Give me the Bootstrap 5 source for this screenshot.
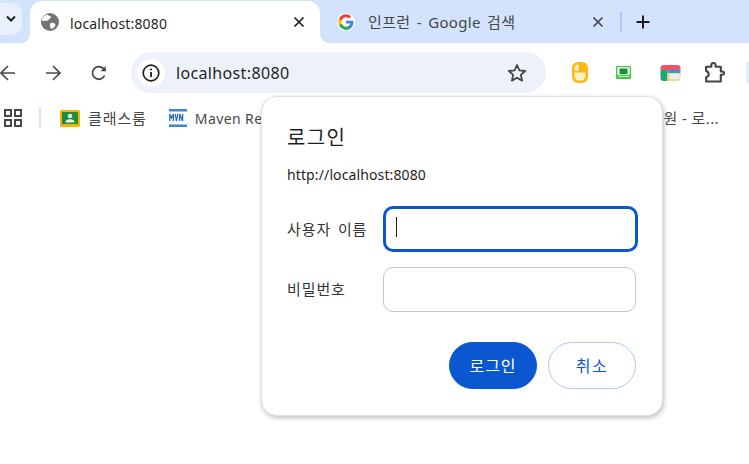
<!DOCTYPE html>
<html lang="ko"><head><meta charset="utf-8"><title>로그인</title>
<link href="https://cdn.jsdelivr.net/npm/bootstrap@5.3.0/dist/css/bootstrap.min.css" rel="stylesheet">
<style>
html,body{height:100%;overflow:hidden;background:#fff;}
body{font-family:"Noto Sans","Noto Sans CJK KR",sans-serif;color:#1f1f1f;position:relative;width:749px;height:464px;}
.strip{height:43px;background:#d3e3fd;padding-top:1px;}
.tabmenu{width:22px;height:32px;margin-top:2px;background:#e9f0fc;border-radius:0 10px 10px 0;flex:none;}
.tab{height:42px;font-size:14px;}
.tab-on{margin-left:8px;width:290px;background:#fff;border-radius:12px 12px 0 0;position:relative;padding-left:11px;color:#1f1f1f;letter-spacing:.15px;}
.tab-on::before,.tab-on::after{content:"";position:absolute;bottom:0;width:10px;height:10px;}
.tab-on::before{left:-10px;background:radial-gradient(circle at 0 0,transparent 10px,#fff 10.5px);}
.tab-on::after{right:-10px;background:radial-gradient(circle at 100% 0,transparent 10px,#fff 10.5px);}
.tab-off{width:300px;padding-left:17px;color:#444746;font-size:15px;letter-spacing:.35px;word-spacing:2px;}
.tabtitle{margin-left:11px;flex:1 1 auto;}
.tab-off .tabtitle{margin-left:13px;}
.tab-on .tabtitle{position:relative;top:1px;}
.tabx{width:12px;height:12px;margin-right:15px;flex:none;}
.tab-off .tabx{margin-right:16px;}
.sep{width:2px;height:20px;background:#a8c7fa;}
.plus{margin-left:14px;}
.tools{height:53px;background:#fff;padding-top:6px;}
.navzone{width:131px;}
.ico-gap{margin-left:30px;}
.ico-gap2{margin-left:29px;}
.omni{width:415px;height:41px;background:#edf2fa;border-radius:21px;padding:0 19px 0 6px;font-size:16px;color:#1f1f1f;letter-spacing:.35px;}
.infoc{width:28px;height:28px;border-radius:50%;background:#fff;flex:none;margin-right:11px;}
.exts{margin-left:26px;}
.extc{width:44px;}
.ext-last{width:42px;}
.ext-tail{width:4px;background:#e4ecfb;}
.bmarks{height:44px;font-size:15px;color:#474747;letter-spacing:.9px;}
.bsep{width:2px;height:20px;background:#d3e3fd;margin:0 19px 0 17px;}
.bname{margin-left:8px;}
.mvn{margin-left:22px;}
.mvntext{font-size:14px;letter-spacing:.4px;white-space:nowrap;}
.tailtext{margin-right:30px;letter-spacing:.4px;}
.dlg{position:absolute;left:261px;top:96px;width:402px;height:320px;background:#fff;border:1px solid #e0e0e0;border-radius:16px;box-shadow:1px 2px 5px rgba(0,0,0,.25);padding:27px 25px 0;}
.dlgtitle{font-size:20px;font-weight:400;line-height:27px;margin:0;color:#1f1f1f;letter-spacing:1.4px;}
.dlgurl{font-size:14px;line-height:20px;margin-top:14px;letter-spacing:.12px;}
.flabel{width:96px;font-size:15px;flex:none;margin:0;letter-spacing:.9px;word-spacing:2px;color:#333;}
.finput{width:253px;height:45px;border:1px solid #c4c7c5;border-radius:10px;background:#fff;box-shadow:none;padding:0 12px;flex:none;}
.finput:focus{border-color:#c4c7c5;box-shadow:none;}
.fon,.fon:focus{width:255px;height:46px;border:3px solid #0b57d0;caret-color:transparent;}
.caretbar{position:absolute;left:134px;top:120px;width:1px;height:20px;background:#1f1f1f;}
.r1{margin-top:21px;}
.r2{margin-top:15px;height:45px;}
.acts{margin-top:30px;gap:11px;margin-right:1px;}
.pbtn{width:88px;height:47px;border-radius:24px;font-size:16px;padding:0;letter-spacing:1px;}
.btn-login,.btn-login:hover{background:#0b57d0;color:#fff;border:1px solid #0b57d0;}
.btn-cancel,.btn-cancel:hover{background:#fff;color:#0b57d0;border:1px solid #a8c7fa;letter-spacing:1.5px;}
</style></head>
<body>
<div class="strip d-flex align-items-start">
  <div class="tabmenu d-flex align-items-center justify-content-center">
    <svg width="12" height="8" viewBox="0 0 12 8"><path d="M2 1.500 6 5.500 10 1.500" fill="none" stroke="#1f1f1f" stroke-width="2"/></svg>
  </div>
  <div class="tab tab-on d-flex align-items-center">
    <svg width="18" height="18" viewBox="0 0 18 18" class="flex-shrink-0"><circle cx="9" cy="9" r="9" fill="#757575"/><path d="M6 1.500c1 1.500 3.500 1 4 2.500.3 1.500-2 1.500-2.500 3C6 8.500 3 7 1 8c-.3-3 2-5.500 5-6.500zM10 10c2-.5 4 .5 4.500 2-.5 1.500-2 3-4 4-.5-1-1.500-1.500-1.500-3 0-1.500 0-2.500 1-3z" fill="#fff"/></svg>
    <span class="tabtitle">localhost:8080</span>
    <svg class="tabx" viewBox="0 0 12 12"><path d="M1.500 1.500 10.500 10.500M10.500 1.500 1.500 10.500" stroke="#1f1f1f" stroke-width="1.700"/></svg>
  </div>
  <div class="tab tab-off d-flex align-items-center">
    <svg width="18" height="18" viewBox="0 0 48 48" class="flex-shrink-0"><circle cx="24" cy="24" r="24" fill="#fff"/><path fill="#4285F4" d="M44 24.500c0-1.400-.1-2.800-.4-4.100H24v7.800h11.200c-.5 2.600-2 4.800-4.200 6.300v5.200h6.700c3.900-3.600 6.300-8.900 6.300-15.200z"/><path fill="#34A853" d="M24 45c5.600 0 10.400-1.900 13.700-5.100L31 34.700c-1.900 1.300-4.200 2-7 2-5.400 0-10-3.600-11.600-8.500H5.500v5.300C8.900 40.300 15.900 45 24 45z"/><path fill="#FBBC05" d="M12.400 28.200c-.4-1.300-.7-2.700-.7-4.200s.3-2.900.7-4.200v-5.300H5.500C4.100 17.300 3.300 20.500 3.300 24s.8 6.700 2.200 9.500z"/><path fill="#EA4335" d="M24 11.300c3 0 5.800 1 8 3.100l6-6C34.400 5 29.600 3 24 3 15.900 3 8.900 7.700 5.500 14.500l6.900 5.300C14 14.900 18.600 11.300 24 11.300z"/></svg>
    <span class="tabtitle">인프런 - Google 검색</span>
    <svg class="tabx" viewBox="0 0 12 12"><path d="M1.500 1.500 10.500 10.500M10.500 1.500 1.500 10.500" stroke="#444746" stroke-width="1.700"/></svg>
  </div>
  <div class="d-flex align-items-center tab">
    <span class="sep"></span>
    <svg class="plus" width="14" height="14" viewBox="0 0 14 14"><path d="M7 0.500V13.500M0.500 7H13.500" stroke="#1f1f1f" stroke-width="2"/></svg>
  </div>
</div>

<div class="tools d-flex align-items-center">
  <div class="navzone d-flex align-items-center flex-shrink-0">
    <svg width="16" height="16" viewBox="0 0 16 16" class="flex-shrink-0"><path d="M15 8H1M8 1 1 8l7 7" fill="none" stroke="#474747" stroke-width="1.600"/></svg>
    <svg width="16" height="16" viewBox="0 0 16 16" class="flex-shrink-0 ico-gap"><path d="M0 8H14M7 1l7 7-7 7" fill="none" stroke="#474747" stroke-width="1.600"/></svg>
    <svg width="16" height="16" viewBox="0 0 16 16" class="flex-shrink-0 ico-gap2"><path d="M13.600 10.500A6.300 6.300 0 1 1 12.300 3.500L14.500 5.500" fill="none" stroke="#474747" stroke-width="1.800"/><path d="M14.800 1V6.200H9.600z" fill="#474747"/></svg>
  </div>
  <div class="omni d-flex align-items-center flex-shrink-0">
    <span class="infoc d-flex align-items-center justify-content-center">
      <svg width="18" height="18" viewBox="0 0 18 18"><circle cx="9" cy="9" r="7.800" fill="none" stroke="#1f1f1f" stroke-width="1.700"/><path d="M9 8V13" stroke="#1f1f1f" stroke-width="1.800"/><circle cx="9" cy="5.500" r="1.100" fill="#1f1f1f"/></svg>
    </span>
    <span class="flex-grow-1">localhost:8080</span>
    <svg width="20" height="20" viewBox="0 0 20 20"><path d="M10 2l2.400 5.400 5.800.6-4.400 3.900 1.300 5.700L10 14.700l-5.100 2.900 1.300-5.700L1.800 8l5.800-.6z" fill="none" stroke="#474747" stroke-width="1.800" stroke-linejoin="round"/></svg>
  </div>
  <div class="exts d-flex align-items-center">
    <div class="extc d-flex">
      <svg width="16" height="21" viewBox="0 0 16 21"><rect width="16" height="21" rx="6" fill="#fbb810"/><path d="M2.500 6.500a4 4 0 0 1 4-4V8.500H2.500z" fill="#fff4d0"/><path d="M2.500 10.500H13.500V14a4.500 4.500 0 0 1-4.500 4.500H7A4.500 4.500 0 0 1 2.500 14z" fill="#fdf0c4"/></svg>
    </div>
    <div class="extc d-flex">
      <svg width="15" height="13" viewBox="0 0 15 13"><rect width="15" height="13" rx="1" fill="#3cc93c"/><rect x="1.200" y="1.200" width="12.600" height="7.600" fill="#f2fcf2"/><rect x="3.500" y="2.500" width="8" height="5.500" fill="#1f8f3a"/><rect x="2" y="10" width="11" height="1" fill="#d8f5d8"/></svg>
    </div>
    <div class="extc d-flex">
      <svg width="21" height="16" viewBox="0 0 20 16"><path d="M3 0H17a3 3 0 0 1 3 3V5H0V3A3 3 0 0 1 3 0z" fill="#ee5468"/><path d="M0 5H7V16H3a3 3 0 0 1-3-3z" fill="#19a974"/><rect x="7" y="5" width="13" height="3" fill="#2f9ae0"/><path d="M7 8H20V13a3 3 0 0 1-3 3H7z" fill="#f6d97a"/><rect x="9" y="9" width="10" height="5" fill="#e6f0f6"/></svg>
    </div>
    <div class="extc ext-last d-flex">
      <svg width="21" height="21" viewBox="0 0 20 20"><path d="M2 4.500H7V3a2 2 0 0 1 4 0V4.500H16V9h1.500a1.600 1.600 0 0 1 0 3.200H16V18.500H2V14.500c2-.5 2.500-1.500 2.500-2.500S4 9 2 8.500z" fill="none" stroke="#444" stroke-width="2" stroke-linejoin="round"/></svg>
    </div>
    <span class="align-self-stretch flex-shrink-0 ext-tail"></span>
  </div>
</div>

<div class="bmarks d-flex align-items-center">
  <svg width="18" height="18" viewBox="0 0 18 18" class="flex-shrink-0 ms-1"><g fill="none" stroke="#474747" stroke-width="2"><rect x="1" y="1" width="6" height="6"/><rect x="11" y="1" width="6" height="6"/><rect x="1" y="11" width="6" height="6"/><rect x="11" y="11" width="6" height="6"/></g></svg>
  <span class="bsep"></span>
  <svg width="20" height="17" viewBox="0 0 20 17" class="flex-shrink-0"><rect width="20" height="17" rx="1.500" fill="#f4b400"/><rect x="2" y="2" width="16" height="12" fill="#1e8e3e"/><circle cx="10" cy="6" r="2.200" fill="#e6f4ea"/><path d="M5.500 12.500a4.500 3.200 0 0 1 9 0z" fill="#e6f4ea"/></svg>
  <span class="bname">클래스룸</span>
  <svg width="18" height="18" viewBox="0 0 18 18" class="flex-shrink-0 mvn"><rect y="0" width="18" height="2.500" fill="#3b86d6"/><rect y="15.500" width="18" height="2.500" fill="#3b86d6"/><path d="M.8 12V5l1.800 4 1.800-4v7M6.200 5l1.300 7 1.300-7M10.600 12V5l3 7V5" fill="none" stroke="#1f6fc4" stroke-width="1.300"/></svg>
  <span class="bname mvntext">Maven Re</span>
  <span class="ms-auto tailtext">원 - 로...</span>
</div>

<div class="dlg" role="dialog">
  <h1 class="dlgtitle">로그인</h1>
  <div class="dlgurl">http://localhost:8080</div>
  <div class="r1 d-flex align-items-center">
    <label class="flabel" for="u">사용자 이름</label>
    <input id="u" class="form-control finput fon" type="text">
  </div>
  <div class="r2 d-flex align-items-center">
    <label class="flabel" for="p">비밀번호</label>
    <input id="p" class="form-control finput" type="password">
  </div>
  <div class="acts d-flex justify-content-end">
    <button class="btn pbtn btn-login" type="button">로그인</button>
    <button class="btn pbtn btn-cancel" type="button">취소</button>
  </div>
  <span class="caretbar"></span>
</div>
<script src="https://cdn.jsdelivr.net/npm/bootstrap@5.3.0/dist/js/bootstrap.bundle.min.js"></script>
</body></html>
